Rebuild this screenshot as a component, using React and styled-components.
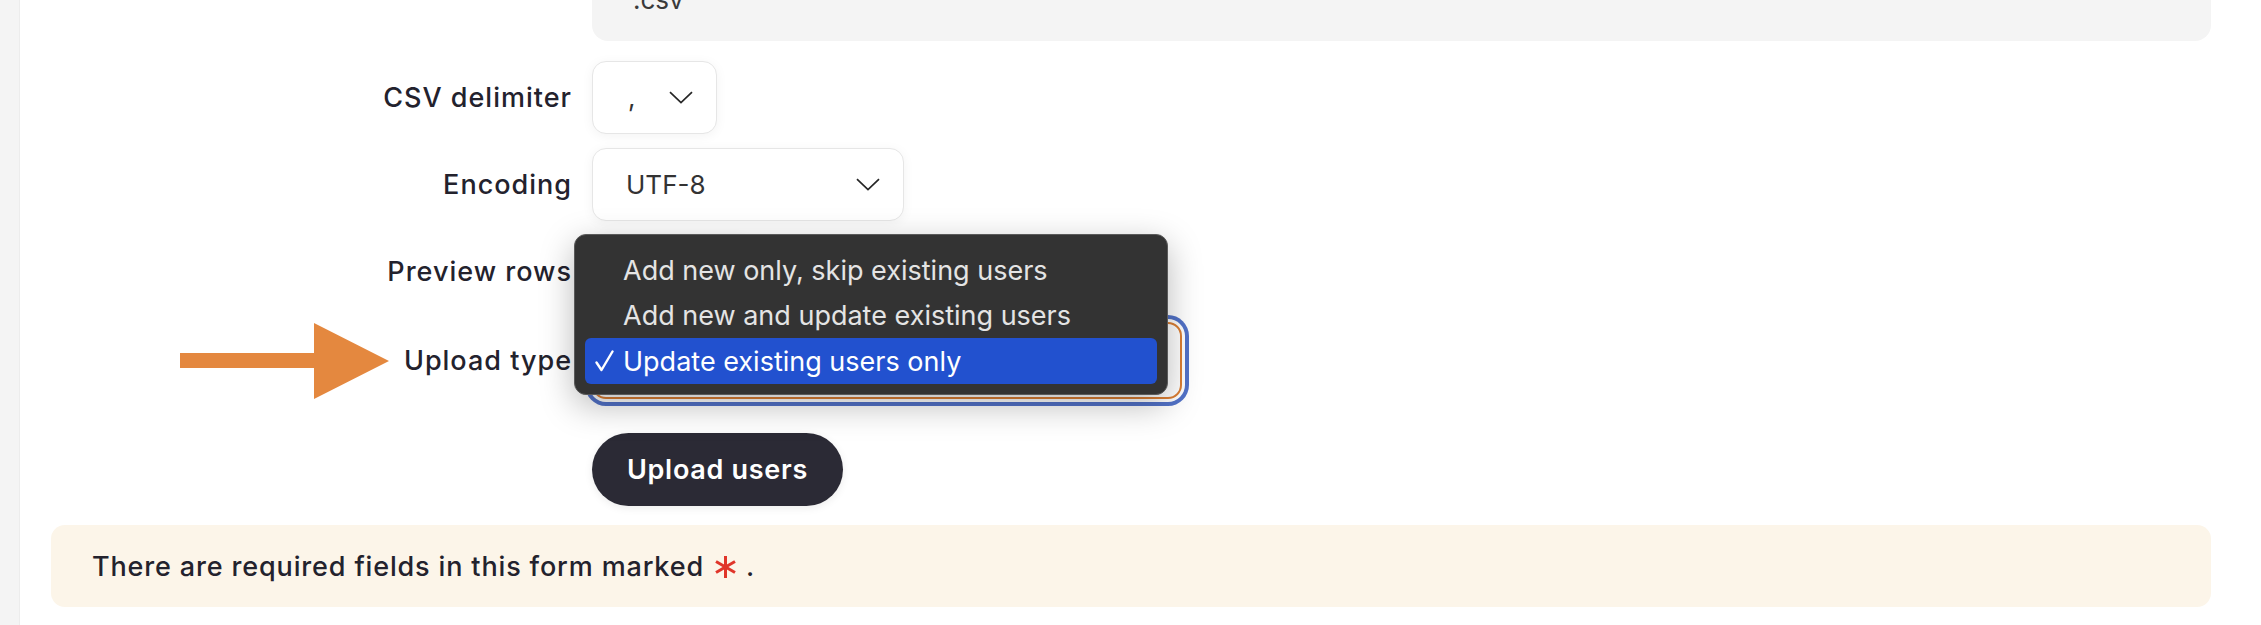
import React from "react";
import styled, { createGlobalStyle } from "styled-components";

const GlobalStyle = createGlobalStyle`
  html, body {
    margin: 0;
    padding: 0;
    background: #ffffff;
  }
  body {
    font-family: Inter, "Noto Sans", "Liberation Sans", sans-serif;
    overflow: hidden;
  }
`;

const Page = styled.div`
  display: flex;
  width: 2261px;
  height: 625px;
  overflow: hidden;
`;

const SideStrip = styled.div`
  width: 19px;
  flex-shrink: 0;
  background: #f4f4f4;
  border-right: 1px solid #ececec;
`;

const Main = styled.main`
  flex: 1;
  padding: 0 50px 0 31px;
  display: flex;
  flex-direction: column;
`;

const Row = styled.div`
  display: grid;
  grid-template-columns: 521px 1fr;
  column-gap: 20px;
  align-items: center;
  margin-top: ${(p) => p.$top || 0}px;
`;

const Label = styled.label`
  position: relative;
  text-align: right;
  font-family: Inter, "Noto Sans", sans-serif;
  font-weight: 500;
  font-size: 27px;
  letter-spacing: 1px;
  color: #23222d;
  white-space: nowrap;
`;

const Control = styled.div`
  position: relative;
  display: flex;
  align-items: center;
`;

const FileBox = styled.div`
  margin-top: -15px;
  padding: 0 40px 26px 41px;
  background: #f4f4f4;
  border-radius: 0 0 16px 16px;
  font-size: 26px;
  line-height: 30px;
  color: #3a3a3a;
`;

const SelectBox = styled.div`
  position: relative;
  box-sizing: border-box;
  width: ${(p) => p.$width}px;
  height: ${(p) => (p.$focused ? 77 : 73)}px;
  display: flex;
  align-items: center;
  justify-content: space-between;
  padding: 0 23px 0 ${(p) => p.$padLeft || 33}px;
  background: #ffffff;
  border: ${(p) => (p.$focused ? "2px solid #dc7f34" : "1px solid #e6e6e6")};
  border-radius: 14px;
  box-shadow: ${(p) =>
    p.$focused
      ? "0 0 0 3px #ffffff, 0 0 0 7px #5272c8"
      : "0 2px 12px rgba(0, 0, 0, 0.05)"};
  font-size: 26px;
  color: #333333;
`;

const Chevron = () => (
  <svg width="24" height="13" viewBox="0 0 24 13" fill="none">
    <path d="M1 1.2 12 11.6 23 1.2" stroke="#262626" strokeWidth="1.7" />
  </svg>
);

const Arrow = styled.svg`
  position: absolute;
  left: 129px;
  top: 50%;
  transform: translateY(-50%);
`;

const Menu = styled.ul`
  position: absolute;
  left: -18px;
  top: -88px;
  width: 594px;
  box-sizing: border-box;
  margin: 0;
  padding: 13px 10px 10px;
  list-style: none;
  background: #333333;
  border: 1px solid #5a5a5a;
  border-radius: 12px;
  box-shadow: 0 10px 34px rgba(0, 0, 0, 0.28);
  z-index: 10;
`;

const MenuItem = styled.li`
  position: relative;
  height: ${(p) => (p.$selected ? 46 : 45)}px;
  display: flex;
  align-items: center;
  padding-left: 38px;
  border-radius: 6px;
  background: ${(p) => (p.$selected ? "#2251cf" : "transparent")};
  color: ${(p) => (p.$selected ? "#ffffff" : "#e4e4e4")};
  font-family: Inter, "Noto Sans", sans-serif;
  font-size: 27px;
  white-space: nowrap;
`;

const Check = styled.svg`
  position: absolute;
  left: 10px;
  top: 50%;
  transform: translateY(-50%);
`;

const Button = styled.button`
  height: 73px;
  padding: 0 35px;
  border: none;
  border-radius: 37px;
  background: #2b2a35;
  color: #ffffff;
  font-family: Inter, "Noto Sans", sans-serif;
  font-weight: 600;
  font-size: 27px;
  letter-spacing: 0.7px;
  box-shadow: 0 2px 8px rgba(0, 0, 0, 0.08);
  cursor: pointer;
`;

const Notice = styled.div`
  margin-top: 19px;
  height: 82px;
  display: flex;
  align-items: center;
  padding-left: 41px;
  background: #fcf5e9;
  border-radius: 14px;
  font-weight: 500;
  font-size: 27px;
  letter-spacing: 0.85px;
  color: #23222d;
`;

const Required = styled.svg`
  margin: 2px 10px 0 11px;
  flex-shrink: 0;
`;

const options = [
  "Add new only, skip existing users",
  "Add new and update existing users",
  "Update existing users only",
];

const App = () => {
  return (
    <>
      <GlobalStyle />
      <Page>
        <SideStrip />
        <Main>
          <Row>
            <div />
            <FileBox>.csv</FileBox>
          </Row>

          <Row $top={20}>
            <Label>CSV delimiter</Label>
            <Control>
              <SelectBox $width={125} $padLeft={35}>
                <span>,</span>
                <Chevron />
              </SelectBox>
            </Control>
          </Row>

          <Row $top={14}>
            <Label>Encoding</Label>
            <Control>
              <SelectBox $width={312}>
                <span>UTF-8</span>
                <Chevron />
              </SelectBox>
            </Control>
          </Row>

          <Row $top={14}>
            <Label>Preview rows</Label>
            <Control>
              <SelectBox $width={160}>
                <span>10</span>
                <Chevron />
              </SelectBox>
            </Control>
          </Row>

          <Row $top={14}>
            <Label>
              <Arrow width="209" height="76" viewBox="0 0 209 76">
                <path d="M0 30h134V0l75 38-75 38V45H0z" fill="#e4883f" />
              </Arrow>
              Upload type
            </Label>
            <Control>
              <SelectBox $width={590} $focused>
                <span>Update existing users only</span>
                <Chevron />
              </SelectBox>
              <Menu role="listbox">
                {options.map((o, i) => (
                  <MenuItem key={o} $selected={i === 2}>
                    {i === 2 && (
                      <Check width="19" height="22" viewBox="0 0 19 22" fill="none">
                        <path
                          d="M1.5 12.5 6.5 20 17.5 1.5"
                          stroke="#ffffff"
                          strokeWidth="2.4"
                          strokeLinecap="round"
                          strokeLinejoin="round"
                        />
                      </Check>
                    )}
                    {o}
                  </MenuItem>
                ))}
              </Menu>
            </Control>
          </Row>

          <Row $top={34}>
            <div />
            <Control>
              <Button>Upload users</Button>
            </Control>
          </Row>

          <Notice>
            There are required fields in this form marked
            <Required width="21" height="24" viewBox="0 0 21 24" aria-label="Required">
              <g stroke="#e0352a" strokeWidth="3" strokeLinecap="butt">
                <path d="M10.5 1v22" />
                <path d="M1 6.5l19 11" />
                <path d="M20 6.5 1 17.5" />
              </g>
            </Required>
            .
          </Notice>
        </Main>
      </Page>
    </>
  );
};

export default App;
